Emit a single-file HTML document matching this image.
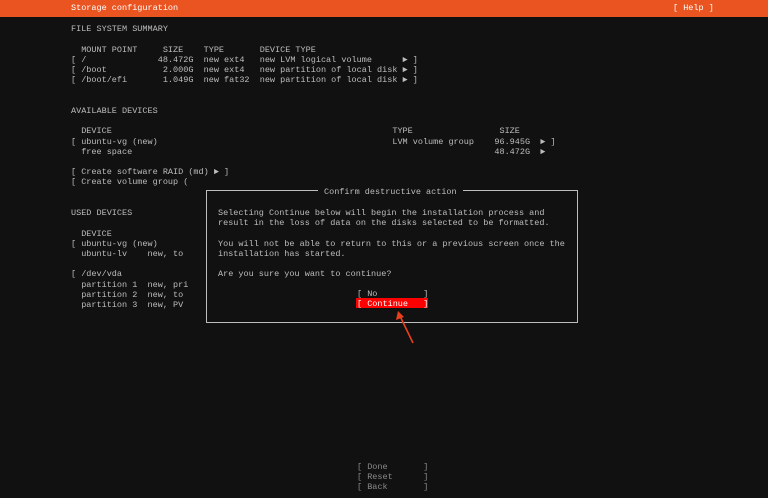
<!DOCTYPE html>
<html><head><meta charset="utf-8"><style>
html,body{margin:0;padding:0;background:#111;width:768px;height:498px;overflow:hidden}
.m{font-family:"Liberation Mono","DejaVu Sans Mono",monospace;font-size:8.5px;line-height:10.22px;color:#bdbdbd;white-space:pre;position:absolute;margin:0}
#hdr{position:absolute;left:0;top:0;width:768px;height:17px;background:#e95420}
#pad{position:absolute;left:189px;top:177px;width:403px;height:160px;background:#111}
#dlg{position:absolute;left:206px;top:190px;width:370px;height:131px;border:1px solid #bdbdbd;background:#111}
#title{position:absolute;left:318px;top:187px;background:#111;padding:0 6px}
#cont{position:absolute;left:356px;top:298px;width:72px;height:10px;background:#f00}
</style></head><body>
<div id="hdr"></div>
<pre class="m" style="left:71px;top:3px;color:#fff">Storage configuration</pre>
<pre class="m" style="left:673px;top:3px;color:#fff">[ Help ]</pre>
<pre class="m" style="left:71px;top:24.2px">FILE SYSTEM SUMMARY

  MOUNT POINT     SIZE    TYPE       DEVICE TYPE
[ /              48.472G  new ext4   new LVM logical volume      ► ]
[ /boot           2.000G  new ext4   new partition of local disk ► ]
[ /boot/efi       1.049G  new fat32  new partition of local disk ► ]


AVAILABLE DEVICES

  DEVICE                                                       TYPE                 SIZE
[ ubuntu-vg (new)                                              LVM volume group    96.945G  ► ]
  free space                                                                       48.472G  ►

[ Create software RAID (md) ► ]
[ Create volume group (LVM) ► ]


USED DEVICES

  DEVICE
[ ubuntu-vg (new)
  ubuntu-lv    new, to
  
[ /dev/vda
  partition 1  new, pri
  partition 2  new, to
  partition 3  new, PV</pre>
<div id="pad"></div>
<div id="dlg"></div>
<pre class="m" id="title">Confirm destructive action</pre>
<pre class="m" style="left:218px;top:208px">Selecting Continue below will begin the installation process and
result in the loss of data on the disks selected to be formatted.

You will not be able to return to this or a previous screen once the
installation has started.

Are you sure you want to continue?</pre>
<div id="cont"></div>
<pre class="m" style="left:357px;top:288.5px">[ No         ]</pre>
<pre class="m" style="left:357px;top:298.5px;color:#fff">[ Continue   ]</pre>
<pre class="m" style="left:357px;top:462px;color:#8a8a8a">[ Done       ]
[ Reset      ]
[ Back       ]</pre>
<svg style="position:absolute;left:0;top:0" width="768" height="498">
<line x1="413" y1="343" x2="399" y2="314" stroke="#e8401c" stroke-width="1.6"/>
<polygon points="398,311 396,320 404,317" fill="#e8401c"/>
</svg>
</body></html>
